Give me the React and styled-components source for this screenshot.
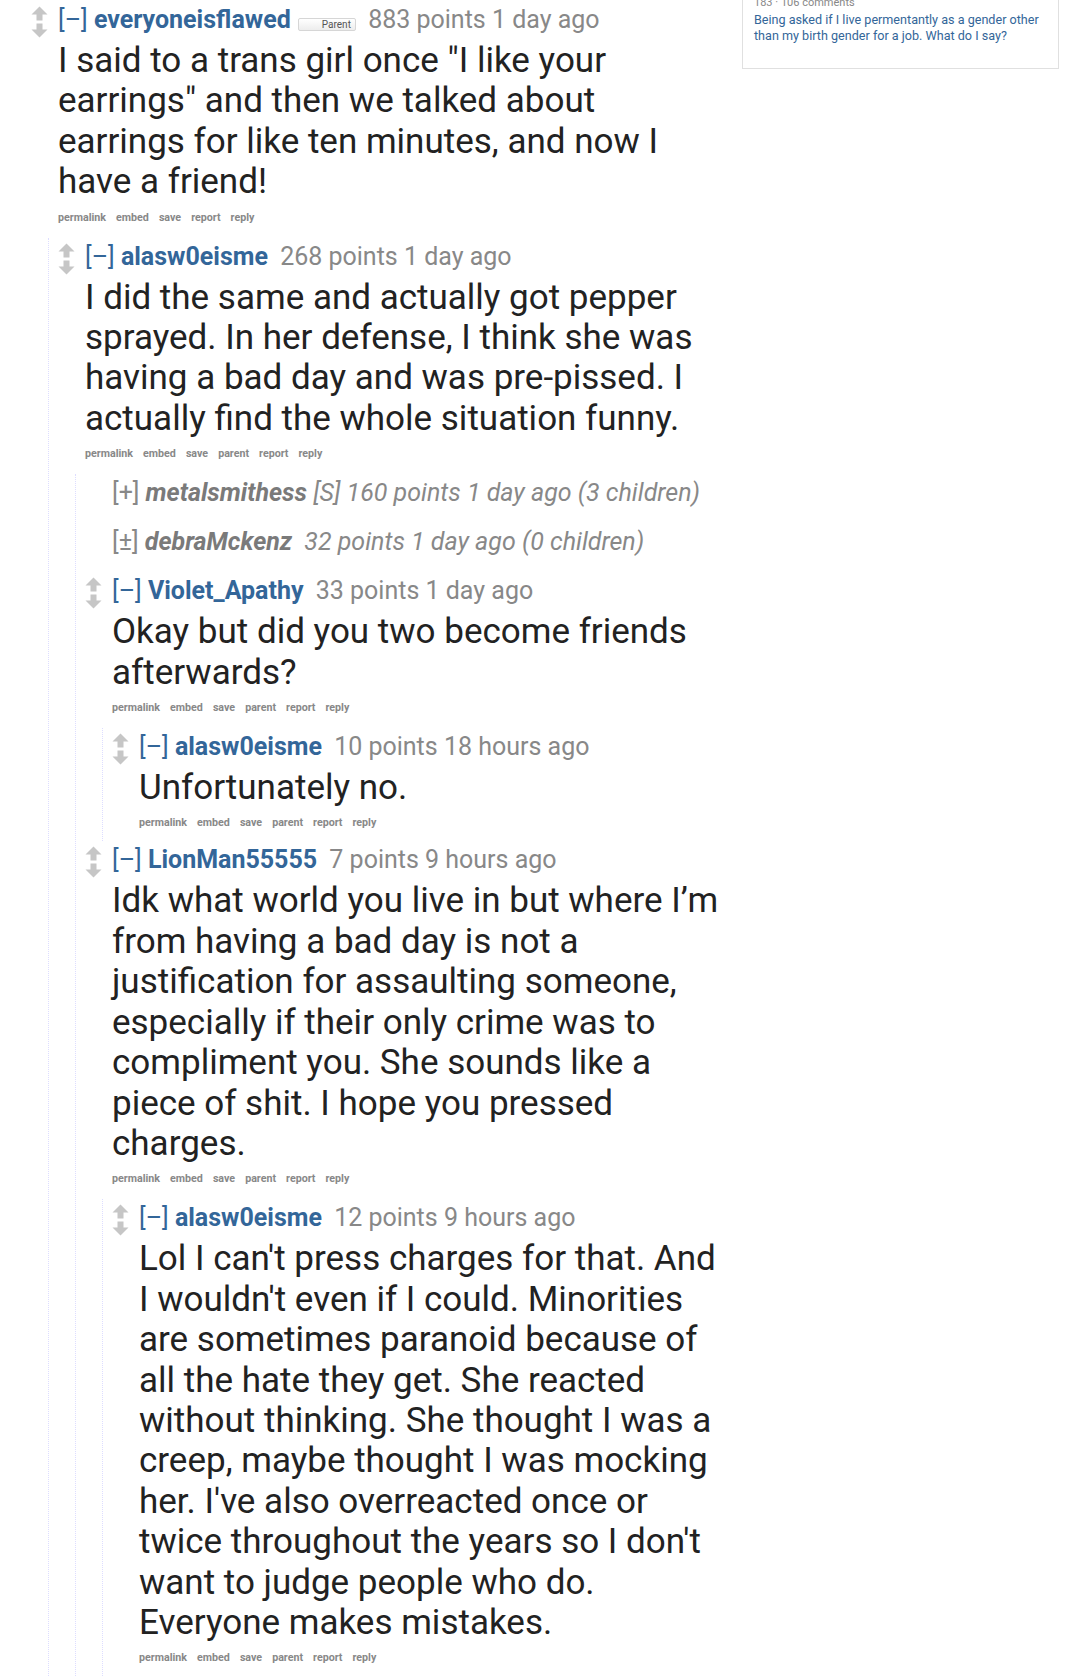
import React from 'react';
import styled, { createGlobalStyle } from 'styled-components';

const GlobalStyle = createGlobalStyle`
  html, body { margin: 0; padding: 0; background: #fff; }
  body { font-family: Roboto, "Noto Sans", "Liberation Sans", sans-serif; }
  #root { overflow: hidden; }
`;

const Page = styled.div`
  display: flex;
  align-items: flex-start;
  width: 1080px;
  min-height: 1679px;
`;

const Main = styled.main`
  width: 724px;
  flex: none;
  padding: 1px 0 0 31px;
  box-sizing: border-box;
`;

const Side = styled.aside`
  width: 317px;
  flex: none;
  margin-left: 18px;
  margin-top: -4px;
  box-sizing: border-box;
  border: 1px solid #e0e0e0;
  border-top: none;
  padding: 0 12px 25px 11px;
`;

const SideMeta = styled.div`
  font-size: 11px;
  line-height: 14px;
  color: #888;
`;

const SideLink = styled.a`
  display: block;
  margin-top: 2px;
  font-size: 12.6px;
  line-height: 15.5px;
  color: #369;
  text-decoration: none;
`;

const CommentBox = styled.div`
  padding-top: 5px;
`;

const Row = styled.div`
  display: flex;
  align-items: flex-start;
  padding-bottom: ${p => (p.$collapsed ? '12px' : '11px')};
`;

const Midcol = styled.div`
  width: 27px;
  flex: none;
  height: 32px;
`;

const Entry = styled.div`
  flex: 1;
  min-width: 0;
`;

const Tagline = styled.div`
  font-size: 25px;
  line-height: 28px;
  color: #888;
  white-space: nowrap;
  font-style: ${p => (p.$collapsed ? 'italic' : 'normal')};
`;

const Expand = styled.span`
  font-style: normal;
  color: ${p => (p.$collapsed ? '#888' : '#369')};
`;

const Author = styled.span`
  font-weight: 700;
  color: ${p => (p.$collapsed ? '#7a7a7a' : '#369')};
`;

const Score = styled.span`
  margin-left: ${p => (p.$tight ? '0' : '6px')};
`;

const ParentTag = styled.span`
  display: inline-block;
  width: 58px;
  height: 13px;
  box-sizing: border-box;
  margin-left: 1px;
  border: 1px solid #d6d6d6;
  border-radius: 2px;
  background: linear-gradient(#ffffff, #ededed);
  font-size: 10px;
  line-height: 11px;
  font-style: normal;
  color: #555;
  text-align: right;
  padding-right: 4px;
`;

const Body = styled.div`
  margin-top: 7px;
  font-size: 35px;
  line-height: 40.4px;
  color: #222;
`;

const Buttons = styled.ul`
  list-style: none;
  margin: 8px 0 0;
  padding: 0;
  display: flex;
  gap: 10px;
  font-size: 10.7px;
  line-height: 14px;
  font-weight: 700;
  color: #888;
`;

const Children = styled.div`
  margin: 2px 0 0 17px;
  border-left: 1px dotted #ddf;
  padding-left: 9px;
`;

const Arrows = () => (
  <svg width="17" height="32" viewBox="0 0 17 32">
    <path d="M8.5 0.5 L16.5 8.5 L11.5 8.5 L11.5 14.5 L5.5 14.5 L5.5 8.5 L0.5 8.5 Z" fill="#c6c6c6" />
    <path d="M5.5 17.5 L11.5 17.5 L11.5 23.5 L16.5 23.5 L8.5 31.5 L0.5 23.5 L5.5 23.5 Z" fill="#c6c6c6" />
  </svg>
);

const BTN_CHILD = ['permalink', 'embed', 'save', 'parent', 'report', 'reply'];
const BTN_TOP = ['permalink', 'embed', 'save', 'report', 'reply'];

const thread = {
  author: 'everyoneisflawed',
  badge: 'Parent',
  meta: '883 points 1 day ago',
  body: 'I said to a trans girl once "I like your earrings" and then we talked about earrings for like ten minutes, and now I have a friend!',
  buttons: BTN_TOP,
  children: [
    {
      author: 'alasw0eisme',
      meta: '268 points 1 day ago',
      body: 'I did the same and actually got pepper sprayed. In her defense, I think she was having a bad day and was pre-pissed. I actually find the whole situation funny.',
      buttons: BTN_CHILD,
      children: [
        { collapsed: true, mark: '[+]', author: 'metalsmithess', attrs: '[S]', meta: '160 points 1 day ago (3 children)' },
        { collapsed: true, mark: '[±]', author: 'debraMckenz', meta: '32 points 1 day ago (0 children)' },
        {
          author: 'Violet_Apathy',
          meta: '33 points 1 day ago',
          body: 'Okay but did you two become friends afterwards?',
          buttons: BTN_CHILD,
          children: [
            {
              author: 'alasw0eisme',
              meta: '10 points 18 hours ago',
              body: 'Unfortunately no.',
              buttons: BTN_CHILD,
            },
          ],
        },
        {
          author: 'LionMan55555',
          meta: '7 points 9 hours ago',
          body: 'Idk what world you live in but where I\u2019m from having a bad day is not a justification for assaulting someone, especially if their only crime was to compliment you. She sounds like a piece of shit. I hope you pressed charges.',
          buttons: BTN_CHILD,
          children: [
            {
              author: 'alasw0eisme',
              meta: '12 points 9 hours ago',
              body: "Lol I can't press charges for that. And I wouldn't even if I could. Minorities are sometimes paranoid because of all the hate they get. She reacted without thinking. She thought I was a creep, maybe thought I was mocking her. I've also overreacted once or twice throughout the years so I don't want to judge people who do. Everyone makes mistakes.",
              buttons: BTN_CHILD,
            },
          ],
        },
      ],
    },
  ],
};

function Comment({ c }) {
  const collapsed = !!c.collapsed;
  return (
    <CommentBox>
      <Row $collapsed={collapsed}>
        <Midcol>{!collapsed && <Arrows />}</Midcol>
        <Entry>
          <Tagline $collapsed={collapsed}>
            <Expand $collapsed={collapsed}>{collapsed ? c.mark : '[\u2013]'}</Expand>{' '}
            <Author $collapsed={collapsed}>{c.author}</Author>
            {c.attrs ? <> {c.attrs}</> : null}
            {c.badge ? <> <ParentTag>{c.badge}</ParentTag></> : null}
            {' '}
            <Score $tight={!!c.attrs}>{c.meta}</Score>
          </Tagline>
          {!collapsed && <Body>{c.body}</Body>}
          {!collapsed && (
            <Buttons>
              {c.buttons.map(b => (
                <li key={b}>{b}</li>
              ))}
            </Buttons>
          )}
        </Entry>
      </Row>
      {c.children && c.children.length > 0 && (
        <Children>
          {c.children.map((ch, i) => (
            <Comment key={i} c={ch} />
          ))}
        </Children>
      )}
    </CommentBox>
  );
}

export default function App() {
  return (
    <>
      <GlobalStyle />
      <Page>
        <Main>
          <Comment c={thread} />
        </Main>
        <Side>
          <SideMeta>183 · 106 comments</SideMeta>
          <SideLink href="#">
            Being asked if I live permentantly as a gender other than my birth gender for a job. What do I say?
          </SideLink>
        </Side>
      </Page>
    </>
  );
}
